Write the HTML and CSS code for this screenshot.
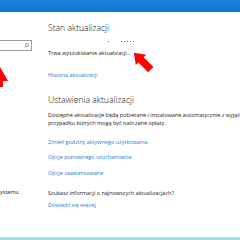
FILE: index.html
```html
<!DOCTYPE html>
<html lang="pl">
<head>
<meta charset="utf-8">
<link rel="stylesheet" href="styles.css">
</head>
<body>
<header class="titlebar"></header>
<div class="layout">
  <nav class="nav">
    <div class="search">
      <svg class="search-icon" width="5" height="5" viewBox="0 0 10 10"><circle cx="6" cy="4" r="3" fill="none" stroke="#666" stroke-width="1.2"/><line x1="4" y1="6" x2="1" y2="9" stroke="#666" stroke-width="1.2"/></svg>
    </div>
    <div class="nav-item">ystemu</div>
  </nav>
  <main class="content">
    <h1 class="heading">Stan aktualizacji</h1>
    <div class="dots"><span class="dot dot-far"></span><span class="dot"></span><span class="dot"></span><span class="dot"></span><span class="dot"></span><span class="dot"></span></div>
    <p class="text status">Trwa wyszukiwanie aktualizacji...</p>
    <a class="link history">Historia aktualizacji</a>
    <h2 class="heading settings">Ustawienia aktualizacji</h2>
    <p class="text para">Dostępne aktualizacje będą pobierane i instalowane automatycznie z wyjątkiem<br>przypadku których mogą być naliczane opłaty.</p>
    <a class="link link-first">Zmień godziny aktywnego użytkowania</a>
    <a class="link link-next">Opcje ponownego uruchamiania</a>
    <a class="link link-next2">Opcje zaawansowane</a>
    <p class="text question">Szukasz informacji o najnowszych aktualizacjach?</p>
    <a class="link more">Dowiedz się więcej</a>
  </main>
</div>
<div class="bottom-line"></div>
<svg class="arrow arrow-left" width="10" height="20" viewBox="0 0 10 20"><polygon points="0,0 8,14 3,14 3,20 0,20" fill="#f00"/></svg>
<svg class="arrow arrow-main" width="24" height="24" viewBox="0 0 26 26"><polygon points="2,4 15.44,6.12 12.61,8.95 23.21,19.55 17.55,25.21 6.95,14.61 4.12,17.44" fill="#f00"/></svg>
</body>
</html>
```

FILE: styles.css
```css
html, body {
  margin: 0;
  padding: 0;
}
body {
  width: 240px;
  height: 240px;
  overflow: hidden;
  background: #fff;
  font-family: "Open Sans", "Noto Sans", sans-serif;
  display: flex;
  flex-direction: column;
  position: relative;
}
.titlebar {
  height: 12px;
  background: linear-gradient(180deg, #1a80d8, #0f78d4);
  flex: none;
}
.layout {
  flex: 1;
  display: grid;
  grid-template-columns: 48px 1fr;
  min-height: 0;
}
.nav {
  display: flex;
  flex-direction: column;
}
.search {
  margin-top: 28px;
  width: 32px;
  height: 11px;
  box-sizing: border-box;
  border: 1px solid #9a9a9a;
  border-left: none;
  display: flex;
  align-items: center;
  justify-content: flex-end;
  padding-right: 2px;
}
.search-icon {
  display: block;
}
.nav-item {
  margin-top: 137px;
  font-size: 5.5px;
  line-height: 8px;
  color: #222;
  white-space: nowrap;
}
.content {
  display: flex;
  flex-direction: column;
  align-items: flex-start;
  white-space: nowrap;
}
.heading {
  margin: 11px 0 0;
  font-size: 8.6px;
  line-height: 10px;
  font-weight: 300;
  color: #111;
}
.settings {
  margin-top: 16px;
}
.dots {
  margin-top: 6px;
  height: 4px;
  width: 100%;
  display: flex;
  align-items: center;
  gap: 2px;
}
.dot {
  width: 1px;
  height: 1px;
  background: #2a7fd6;
}
.dot-far {
  margin-left: 60px;
  margin-right: 10px;
}
.text {
  margin: 0;
  font-size: 5.5px;
  line-height: 8px;
  color: #222;
}
.status {
  margin-top: 6px;
}
.para {
  margin-top: 6px;
}
.question {
  margin-top: 12px;
}
.link {
  display: block;
  font-size: 5.5px;
  line-height: 8px;
  color: #1f7ed4;
}
.history {
  margin-top: 14px;
}
.link-first {
  margin-top: 11px;
}
.link-next {
  margin-top: 7px;
}
.link-next2 {
  margin-top: 8px;
}
.more {
  margin-top: 4px;
}
.bottom-line {
  height: 3px;
  background: #a6dcf0;
  flex: none;
}
.arrow {
  position: absolute;
  display: block;
}
.arrow-left {
  left: 0;
  top: 67px;
}
.arrow-main {
  left: 132px;
  top: 49px;
}
```
